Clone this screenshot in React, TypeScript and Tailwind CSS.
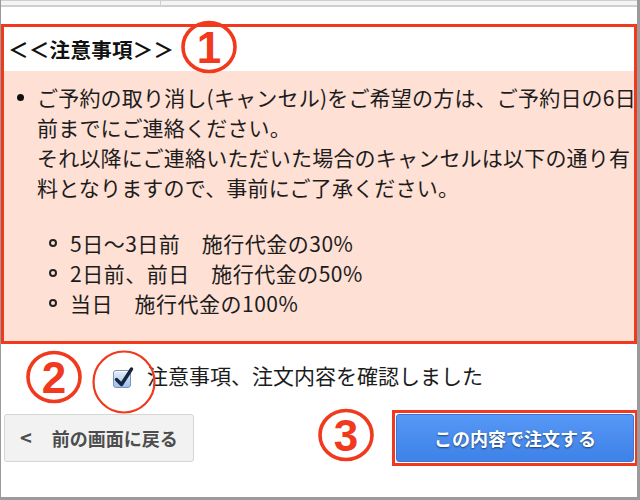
import React from "react";

const jp = { fontFamily: '"Noto Sans CJK JP", "Noto Sans", sans-serif' };

function Mark({ n, className }: { n: string; className: string }) {
  return (
    <svg className={`absolute pointer-events-none ${className}`} viewBox="0 0 60 56">
      <ellipse cx="30" cy="28" rx="26" ry="24.5" fill="none" stroke="#f0391d" strokeWidth="3.6" />
      <text
        x="30"
        y="44"
        textAnchor="middle"
        fontSize="44"
        fontWeight="bold"
        fill="#f0391d"
        fontFamily="Liberation Sans, Arial, sans-serif"
      >
        {n}
      </text>
    </svg>
  );
}

function CheckBox() {
  return (
    <span className="relative inline-block w-[18px] h-[18px] rounded-[3px] border border-[#7f93b3] bg-gradient-to-b from-[#e3eefc] to-[#9ec0ee] shadow-[inset_0_1px_0_#fff]">
      <svg className="absolute -left-[1px] -top-[5px] w-[22px] h-[22px]" viewBox="0 0 22 22">
        <path d="M3.5 13.5 L8.5 18.5 L18.5 3" fill="none" stroke="#17243f" strokeWidth="3.4" strokeLinejoin="round" strokeLinecap="round" />
      </svg>
    </span>
  );
}

export default function App() {
  const fees = [
    "5日〜3日前　施行代金の30%",
    "2日前、前日　施行代金の50%",
    "当日　施行代金の100%",
  ];

  return (
    <div className="relative w-[640px] h-[500px] overflow-hidden bg-white border-l border-r-[3px] border-b-[3px] border-[#9b9b9b]" style={jp}>
      {/* top table edge */}
      <div className="flex h-[7px] bg-[#f4f4f4] border-t border-b-2 border-[#cfcfcf]">
        <div className="w-[160px] border-r border-[#cfcfcf]" />
      </div>

      {/* notice box */}
      <div className="mt-[17px] border-[3px] border-[#f0391d]">
        <div className="h-[44px] pl-[4px] flex items-center text-[20.5px] font-bold text-[#111] tracking-[0.3px]">
          ＜＜注意事項＞＞
        </div>
        <div className="bg-[#fee0d5] pt-[11px] pb-[23px] text-[21px] leading-[30px] text-[#1c1c1c] whitespace-nowrap tracking-[0.2px]">
          <div className="flex">
            <span className="w-[33px] flex justify-center pt-[12px] shrink-0">
              <span className="block w-[7px] h-[7px] rounded-full bg-[#111]" />
            </span>
            <p>
              ご予約の取り消し(キャンセル)をご希望の方は、ご予約日の6日
              <br />
              前までにご連絡ください。
              <br />
              それ以降にご連絡いただいた場合のキャンセルは以下の通り有
              <br />
              料となりますので、事前にご了承ください。
            </p>
          </div>
          <ul className="mt-[26px] pl-[45px]">
            {fees.map((f) => (
              <li key={f} className="flex items-center tracking-[0.5px]">
                <span className="block w-[8px] h-[8px] rounded-full border-2 border-[#222] mr-[13px]" />
                {f}
              </li>
            ))}
          </ul>
        </div>
      </div>

      {/* confirm checkbox */}
      <div className="flex items-center h-[68px] pl-[112px] pt-[2px]">
        <CheckBox />
        <span className="ml-[16px] text-[21px] text-[#1c1c1c] -mt-[6px]">注意事項、注文内容を確認しました</span>
      </div>

      {/* buttons */}
      <div className="flex items-center justify-between pl-[3px] -mt-[2px]">
        <button className="w-[190px] h-[48px] rounded-[3px] border border-[#d5d5d5] bg-[#f2f2f2] flex items-center pl-[15px] text-[18px] font-bold text-[#4d4d4d]">
          <span className="mr-[20px] text-[20px]">&lt;</span>
          前の画面に戻る
        </button>
        <div className="border-[3px] border-[#f0391d] p-[1px] -mr-[1px]">
          <button className="w-[238px] h-[48px] rounded-[3px] border border-[#3a76d8] bg-gradient-to-b from-[#5598f6] to-[#3f82e8] text-white text-[18px] font-bold [text-shadow:0_1px_2px_rgba(0,0,0,0.55)]">
            この内容で注文する
          </button>
        </div>
      </div>

      {/* annotations */}
      <Mark n="1" className="left-[178px] top-[19px] w-[60px] h-[56px]" />
      <Mark n="2" className="left-[23px] top-[349px] w-[60px] h-[56px]" />
      <Mark n="3" className="left-[315px] top-[407px] w-[60px] h-[56px]" />
      <svg className="absolute left-[90px] top-[349px] w-[66px] h-[66px] pointer-events-none" viewBox="0 0 66 66">
        <ellipse cx="33" cy="33" rx="30.5" ry="30.5" fill="none" stroke="#f0391d" strokeWidth="2.2" />
      </svg>
    </div>
  );
}
